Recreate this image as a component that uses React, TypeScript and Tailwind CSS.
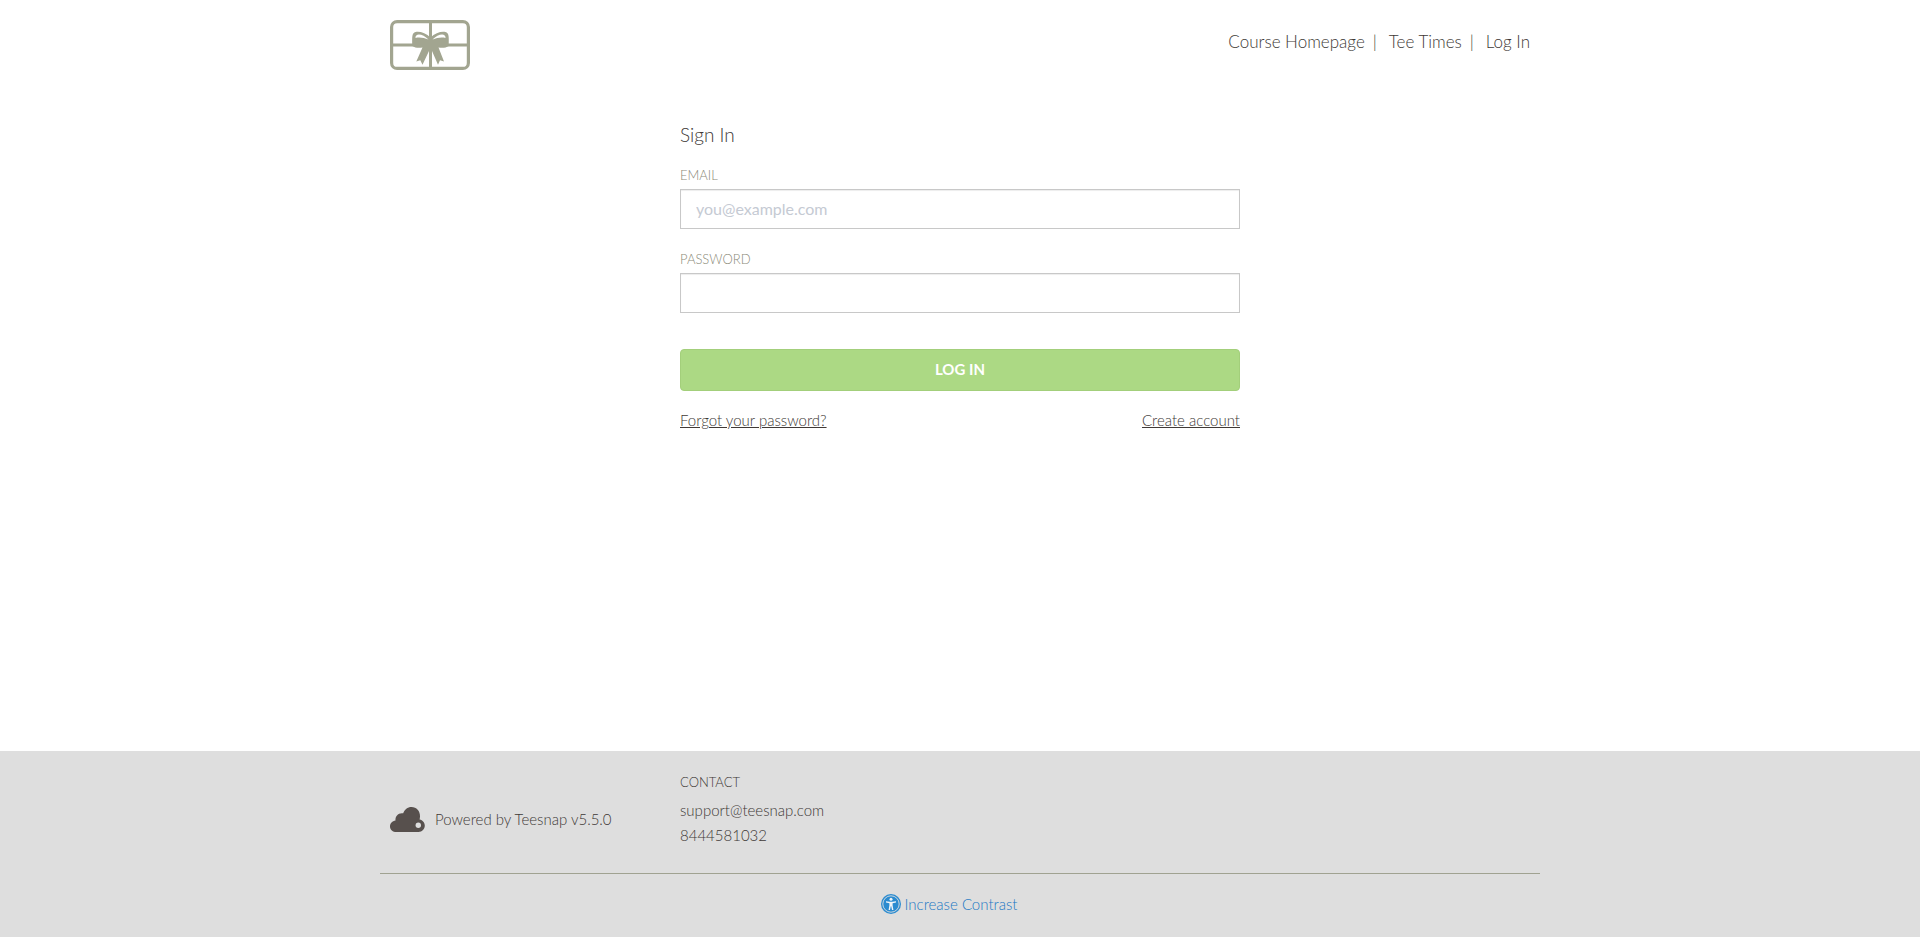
import type { ReactNode } from "react";

const navLinks = ["Course Homepage", "Tee Times", "Log In"];

export default function App() {
  return (
    <div className="flex min-h-screen flex-col bg-white font-['Lato','Open_Sans',sans-serif] font-light text-[#403936]">
      <Header />
      <main className="mx-auto w-full max-w-[1160px] grow px-[10px] pt-[45px]">
        <SignInForm />
      </main>
      <Footer />
    </div>
  );
}

function Header() {
  return (
    <header className="mx-auto flex w-full max-w-[1160px] items-start justify-between px-[10px] pt-5">
      <a href="#home" aria-label="Home">
        <GiftCardLogo />
      </a>
      <nav className="flex pt-2.5 text-[17px] leading-6">
        {navLinks.map((label, i) => (
          <span key={label} className="flex">
            {i > 0 && <span className="pr-3 pl-2">|</span>}
            <a href="#nav">{label}</a>
          </span>
        ))}
      </nav>
    </header>
  );
}

function SignInForm() {
  return (
    <form className="mx-auto w-full max-w-[560px]" onSubmit={(e) => e.preventDefault()}>
      <h1 className="mb-2.5 text-[19px] leading-10">Sign In</h1>
      <Field id="email" label="EMAIL">
        <input
          id="email"
          type="email"
          placeholder="you@example.com"
          className="h-10 w-full border border-[#c8c8c8] bg-white px-[15px] pb-0.5 text-base font-normal shadow-[inset_0_1px_1px_rgba(0,0,0,0.075)] outline-none placeholder:text-[#c5cad3]"
        />
      </Field>
      <Field id="password" label="PASSWORD">
        <input
          id="password"
          type="password"
          className="h-10 w-full border border-[#c8c8c8] bg-white px-[15px] pb-0.5 text-base font-normal shadow-[inset_0_1px_1px_rgba(0,0,0,0.075)] outline-none"
        />
      </Field>
      <button
        type="submit"
        className="mt-4 h-[42px] w-full rounded border border-[#a3cf7b] bg-[#acd984] pb-0.5 text-[15px] font-bold text-white"
      >
        LOG IN
      </button>
      <div className="mt-[19px] flex justify-between text-[15px] leading-5">
        <a href="#forgot" className="underline">
          Forgot your password?
        </a>
        <a href="#create" className="underline">
          Create account
        </a>
      </div>
    </form>
  );
}

function Field({ id, label, children }: { id: string; label: string; children: ReactNode }) {
  return (
    <div className="mb-5">
      <label htmlFor={id} className="block pb-1 text-[13px] leading-5 text-[#8b8a78]">
        {label}
      </label>
      {children}
    </div>
  );
}

function Footer() {
  return (
    <footer className="bg-[#dedede] text-[15px]">
      <div className="mx-auto w-full max-w-[1160px]">
        <div className="grid h-[123px] grid-cols-4 border-b border-[#a0a291]">
          <div className="flex items-center gap-2.5 px-[10px] pt-3.5">
            <CloudLogo />
            <span>Powered by Teesnap v5.5.0</span>
          </div>
          <div className="px-[10px] pt-[21px]">
            <h2 className="text-[13px] leading-5">CONTACT</h2>
            <div className="mt-1.5 leading-[25px]">
              <a href="mailto:support@teesnap.com" className="block">
                support@teesnap.com
              </a>
              <a href="tel:8444581032" className="block">
                8444581032
              </a>
            </div>
          </div>
        </div>
        <div className="flex h-[63px] justify-center pt-5 pr-[22px]">
          <button type="button" className="flex h-5 items-center gap-1 text-[#1c78c4]">
            <ContrastIcon />
            <span>Increase Contrast</span>
          </button>
        </div>
      </div>
    </footer>
  );
}

/** Gift card tied with a bow. */
function GiftCardLogo() {
  return (
    <svg width="80" height="50" viewBox="0 0 80 50" fill="none" aria-hidden="true">
      <rect x="1.6" y="1.6" width="76.8" height="46.8" rx="5.5" stroke="#a2a590" strokeWidth="3.2" />
      <path d="M0 25H80M40.5 0V50" stroke="#a2a590" strokeWidth="3" />
      <path
        d="M40.5 17.5C36 13 29.5 11 25.5 12C22 13 22 16 22.3 26C25 28 29 28.2 32.5 27.5L26.3 41.5L30.3 40.3L32.5 44.8L39 31H42L48 44.8L50 40.300L54 41.5L48.500 27.5C52 28.2 56 28 58.7 26C59 16 59 13 55.5 12C51.500 11 45 13 40.5 17.5Z"
        fill="#a2a590"
      />
      <path
        d="M25.5 18C25 12.5 33 13.5 38.5 19.5C34 17.6 29 17 25.5 18ZM55.5 18C56 12.5 48 13.5 42.5 19.5C47 17.6 52 17 55.5 18Z"
        fill="white"
      />
    </svg>
  );
}

function CloudLogo() {
  return (
    <svg width="35" height="25" viewBox="0 0 35 25" aria-hidden="true">
      <path
        d="M6.5 25C2.8 25 0 22.6 0 19.4C0 16.5 2.3 14.2 5.5 13.6C5 9 8.5 5.5 13.2 6.3C14.5 2.6 17.5 0 21.5 0C26.5 0 30.2 4 30 9.5C29.9 10.7 29.8 11.5 29.6 12.4C32.7 13 34.8 15.6 34.8 18.6C34.8 22.2 32.2 25 28.5 25Z"
        fill="#57504d"
      />
      <circle cx="28.3" cy="18.2" r="2.7" fill="#dedede" />
    </svg>
  );
}

function ContrastIcon() {
  return (
    <svg width="20" height="20" viewBox="0 0 20 20" aria-hidden="true">
      <circle cx="10" cy="10" r="10" fill="#2a8bd0" />
      <circle cx="10" cy="10" r="8.2" fill="none" stroke="#dedede" strokeWidth="0.9" />
      <circle cx="10" cy="5.2" r="1.5" fill="#eef4f8" />
      <path
        d="M5 7.2L8.8 7.8H11.2L15 7.2V8.5L11.6 9.2V11.2L12.4 16H11L10.2 12.3H9.8L9 16H7.6L8.4 11.2V9.2L5 8.5Z"
        fill="#eef4f8"
      />
    </svg>
  );
}
